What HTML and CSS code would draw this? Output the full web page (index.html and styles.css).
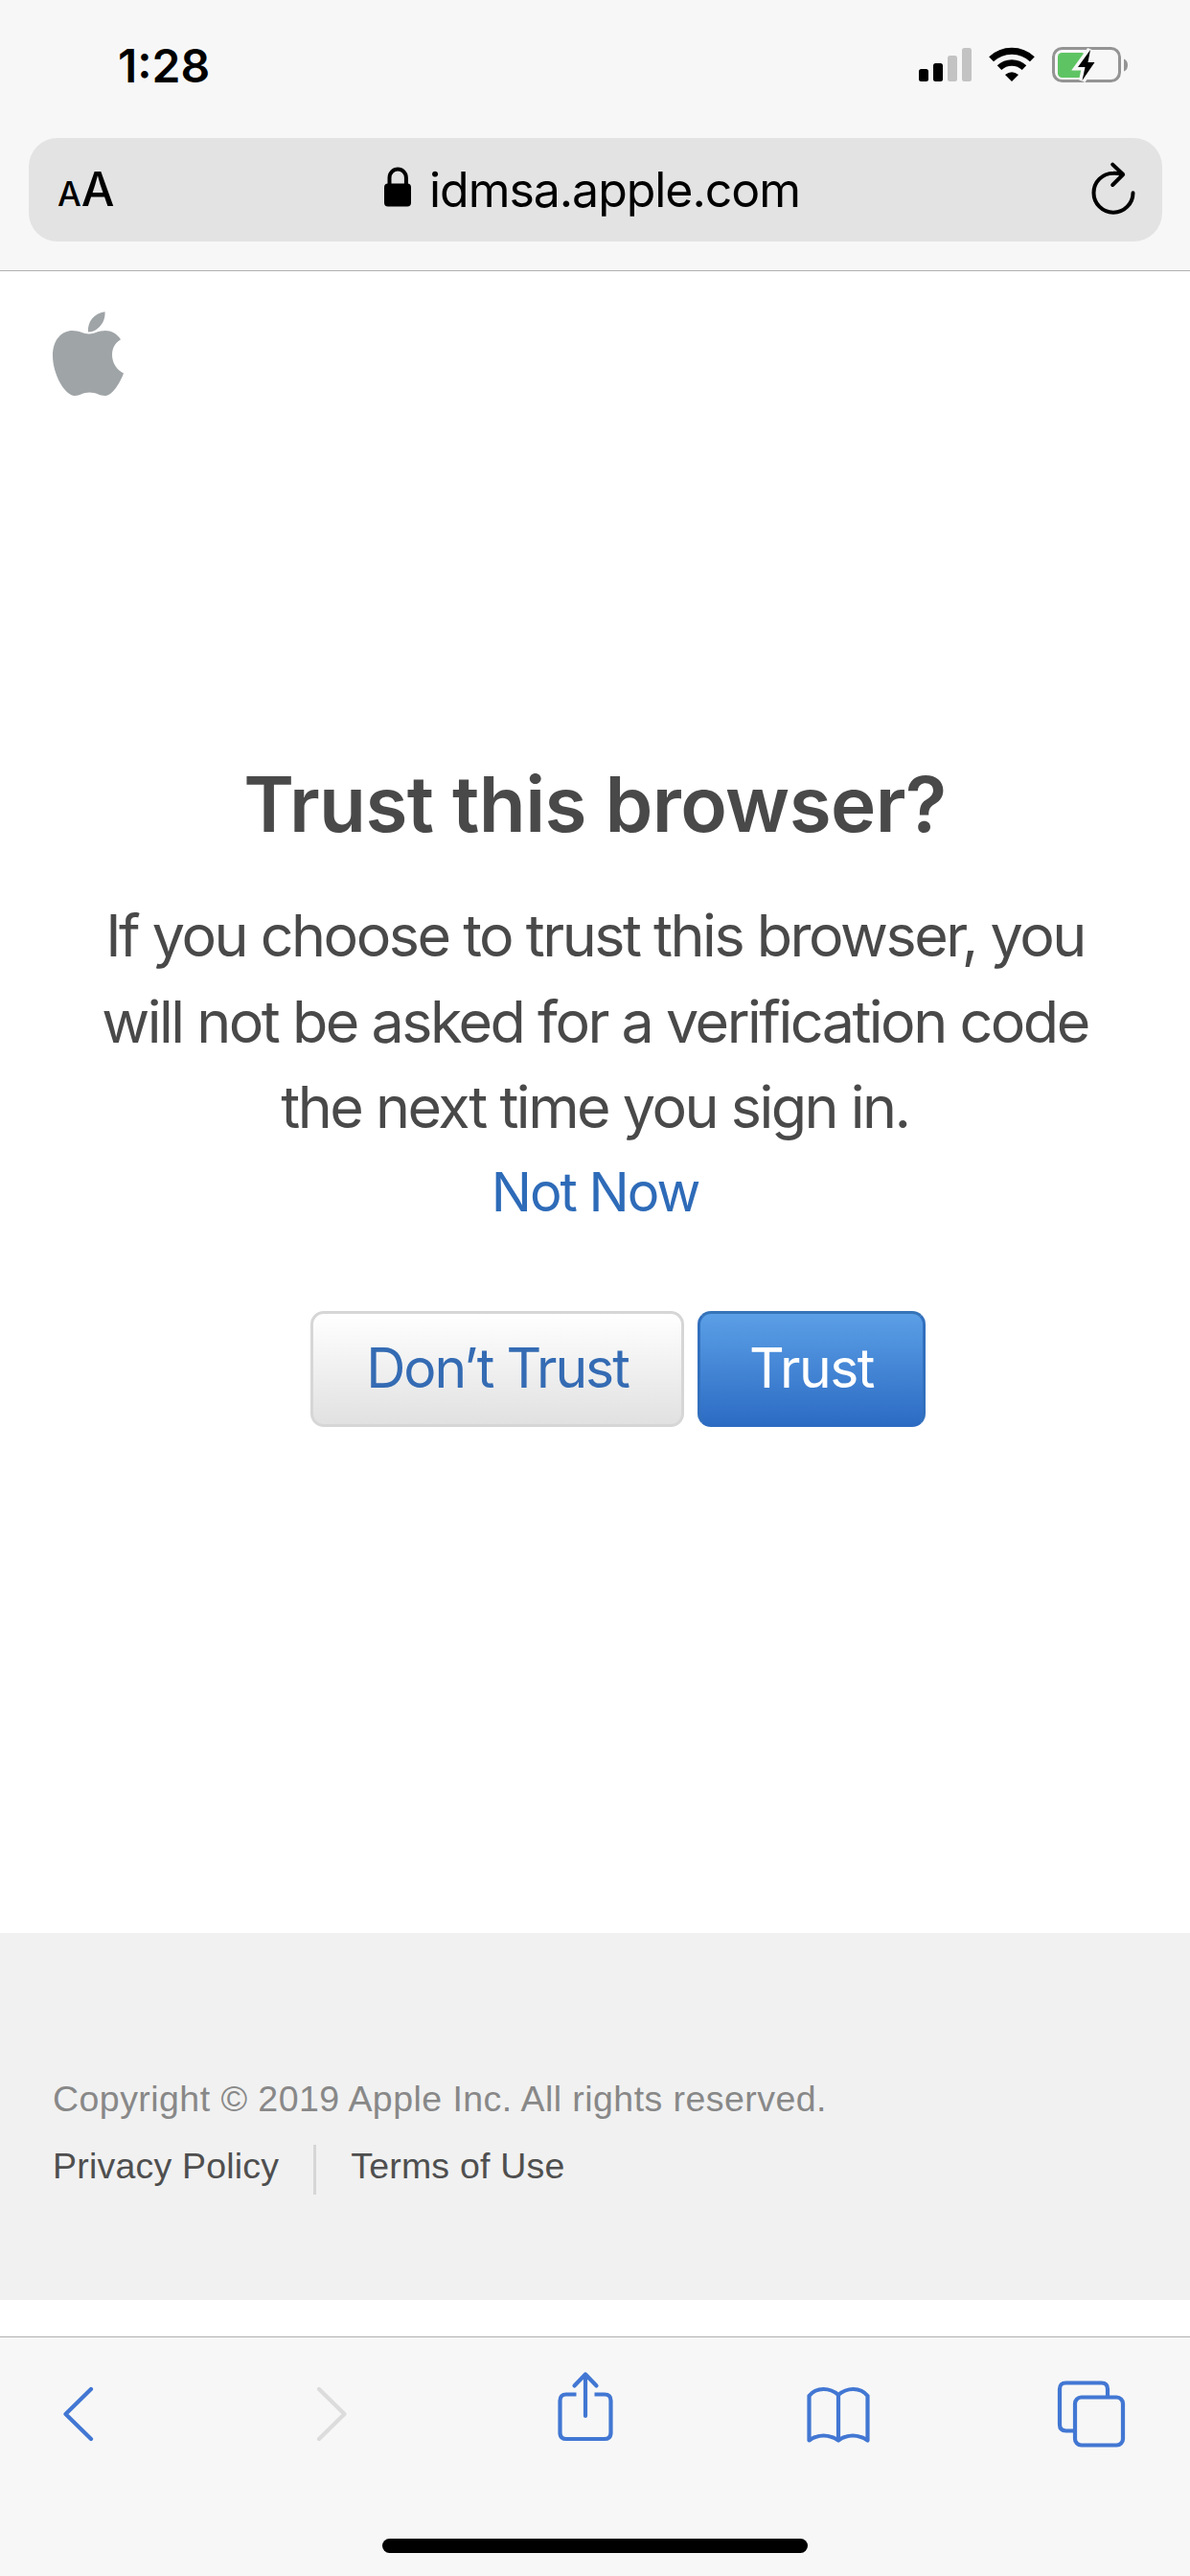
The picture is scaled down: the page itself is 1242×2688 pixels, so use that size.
FILE: index.html
```html
<!DOCTYPE html>
<html lang="en">
<head>
    <meta charset="UTF-8">
    <meta name="viewport" content="width=device-width, initial-scale=1.0">
    <title>Trust this browser?</title>
    <link rel="stylesheet" href="styles.css">
</head>
<body>
    <header class="browser-top">
        <div class="status-bar">
            <span class="time">1:28</span>
            <div class="status-icons">
                <svg class="signal" width="55" height="36" viewBox="0 0 55 36">
                    <rect x="0" y="22" width="10" height="13" rx="2.5"/>
                    <rect x="15" y="16" width="10" height="19" rx="2.5"/>
                    <rect x="30" y="8" width="10" height="27" rx="2.5" fill="#c3c3c3"/>
                    <rect x="45" y="0" width="10" height="35" rx="2.5" fill="#c3c3c3"/>
                </svg>
                <svg class="wifi" width="48" height="37" viewBox="0 0 48 37">
                    <path d="M2.600 12.800A31 31 0 0 1 45.400 12.800" fill="none" stroke="#000" stroke-width="7"/>
                    <path d="M11 21.600A19 19 0 0 1 37 21.600" fill="none" stroke="#000" stroke-width="6.600"/>
                    <path d="M17 29Q24 23.400 31 29L24 36Z"/>
                </svg>
                <svg class="battery" width="80" height="38" viewBox="0 0 80 38">
                    <rect x="1.500" y="1.500" width="69" height="34" rx="9" fill="none" stroke="#949494" stroke-width="3"/>
                    <path d="M75 12.500Q79 14 79 19T75 25.500Z" fill="#949494"/>
                    <rect x="6" y="6" width="29" height="26" rx="4.500" fill="#5ec463"/>
                    <path d="M40 3L27 21H34.500L31.500 35L44.500 16H37.500Z" stroke="#f7f7f7" stroke-width="7"/>
                    <path d="M40 3L27 21H34.500L31.500 35L44.500 16H37.500Z"/>
                </svg>
            </div>
        </div>
        <div class="address-bar">
            <span class="text-size"><small>A</small>A</span>
            <div class="url">
                <svg width="28" height="42" viewBox="0 0 28 42">
                    <path d="M5.500 20V11.500a8.700 9 0 0 1 17.400 0V20" fill="none" stroke="#000" stroke-width="4"/>
                    <rect x="0" y="17.500" width="28" height="24" rx="4"/>
                </svg>
                <span>idmsa.apple.com</span>
            </div>
            <svg class="reload" width="48" height="56" viewBox="0 0 48 56">
                <path d="M44.500 32.200A20.500 20.500 0 1 1 24 11.700Q29 11.500 34 13M23.200 2.600L34.200 13L23.200 24" fill="none" stroke="#000" stroke-width="4" stroke-linecap="round" stroke-linejoin="round"/>
            </svg>
        </div>
    </header>

    <main class="page">
        <svg class="logo" width="76" height="90" viewBox="0 0 76 90">
            <path d="M37 21.500C36 11 43 2 54.500 .3C55.500 11 47 21.500 37 21.500Z"/>
            <path d="M38 23.500C42.500 23.500 48 20 55 20C61 20 67 23 71 29.200C65 33 62 38 62 45C62 54 67 61 74 64.500C71 73 62.500 88 55 88C49 88 45.500 84.500 38.500 84.500C31.500 84.500 28 88 23 88C13 88 0 66 0 46C0 29 10 20 20.500 20C27.500 20 33 23.500 38 23.500Z"/>
        </svg>

        <h1>Trust this browser?</h1>
        <p class="message">
            If you choose to trust this browser, you<br>
            will not be asked for a verification code<br>
            the next time you sign in.
        </p>
        <a class="not-now" href="#">Not Now</a>
        <div class="buttons">
            <button class="btn btn-light">Don’t Trust</button>
            <button class="btn btn-blue">Trust</button>
        </div>
    </main>

    <footer class="footer">
        <p class="copyright">Copyright © 2019 Apple Inc. All rights reserved.</p>
        <div class="footer-links">
            <a class="privacy" href="#">Privacy Policy</a>
            <a class="terms" href="#">Terms of Use</a>
        </div>
    </footer>

    <nav class="toolbar">
        <div class="toolbar-icons">
            <svg width="70" height="80" viewBox="0 0 70 80">
                <path d="M48 22L21.500 48L48 74"/>
            </svg>
            <svg class="disabled" width="70" height="80" viewBox="0 0 70 80">
                <path d="M22 22L48.500 48L22 74"/>
            </svg>
            <svg width="70" height="80" viewBox="0 0 70 80">
                <path d="M25.500 27.500H15Q8.500 27.500 8.500 34V67.500Q8.500 74 15 74H55Q61.500 74 61.500 67.500V34Q61.500 27.500 55 27.500H44.500" stroke-linecap="butt"/>
                <path d="M35 50V7M23.500 18.500L35 6.500L46.500 18.500"/>
            </svg>
            <svg width="70" height="80" viewBox="0 0 70 80">
                <path d="M35 75.500V28Q28 22 19.500 22Q10 22 4.500 29V75.500Q11.500 70.500 19.500 70.500T35 75.500Q42 70.500 50 70.500T65.500 75.500V29Q60 22 50.500 22Q42 22 35 28"/>
            </svg>
            <svg width="70" height="80" viewBox="0 0 70 80">
                <path d="M52 30V22Q52 15.500 45.500 15.500H8.500Q2 15.500 2 22V59Q2 65.500 8.500 65.500H17"/>
                <rect x="18" y="30.500" width="50" height="50" rx="6.500"/>
            </svg>
        </div>
        <div class="home-indicator"></div>
    </nav>
</body>
</html>
```

FILE: styles.css
```css
* {
    box-sizing: border-box;
}
body {
    font-family: Inter, "Liberation Sans", sans-serif;
    background-color: white;
    color: #494949;
    margin: 0;
    height: 2688px;
    display: flex;
    flex-direction: column;
}
svg {
    display: block;
    overflow: visible;
    flex-shrink: 0;
}
a {
    text-decoration: none;
}

/* status bar and address bar */
.browser-top {
    height: 283px;
    background-color: #f7f7f7;
    border-bottom: 1px solid #b0b0b0;
    color: black;
}
.status-bar {
    height: 144px;
    display: flex;
    justify-content: space-between;
    padding: 48px 64px 0 123px;
}
.time {
    font-size: 48px;
    font-weight: 600;
    line-height: 41px;
}
.status-icons {
    display: flex;
    gap: 18px;
}
.signal {
    margin-top: 2px;
}
.wifi, .battery {
    margin-top: 1px;
}
.address-bar {
    height: 108px;
    margin: 0 29px 0 30px;
    padding: 0 27px 0 30px;
    background-color: #e3e3e3;
    border-radius: 30px;
    display: flex;
    justify-content: space-between;
    align-items: center;
}
.text-size {
    font-size: 49px;
    font-weight: 500;
    line-height: 108px;
    width: 60px;
    padding-top: 3px;
    white-space: nowrap;
}
.text-size small {
    font-size: 35px;
}
.url {
    display: flex;
    align-items: center;
    gap: 19px;
    margin-right: 22px;
    font-size: 50px;
    line-height: 108px;
    letter-spacing: -1.05px;
}
.url svg {
    margin-top: -6px;
}
.reload {
    margin-top: -3px;
}

/* page content */
.page {
    height: 1734px;
    display: flex;
    flex-direction: column;
    align-items: center;
}
.logo {
    align-self: flex-start;
    margin: 42px 0 0 55px;
    fill: #9fa4a7;
}
h1 {
    margin: 379px 0 0;
    font-size: 80px;
    font-weight: 600;
    line-height: 90px;
    letter-spacing: -0.6px;
    white-space: nowrap;
}
.message {
    margin: 48px 0 0;
    font-size: 61px;
    line-height: 89.5px;
    letter-spacing: -2.5px;
    text-align: center;
    white-space: nowrap;
}
.not-now {
    margin-top: 5px;
    font-size: 56px;
    line-height: 76px;
    letter-spacing: -2px;
    color: #2e6bb8;
}
.buttons {
    display: flex;
    gap: 14px;
    margin-top: 86px;
    padding-left: 48px;
}
.btn {
    height: 121px;
    padding: 0 0 2px;
    border: 3px solid #d6d6d6;
    border-radius: 14px;
    font-family: inherit;
    font-size: 57px;
    letter-spacing: -2px;
}
.btn-light {
    width: 390px;
    color: #346bb3;
    background: linear-gradient(#ffffff, #e1e1e1);
}
.btn-blue {
    width: 238px;
    color: white;
    border-color: #3674b8 #3270be #2d6bc2;
    background: linear-gradient(#5b9fe6, #2d6cc4);
    letter-spacing: -1.5px;
}

/* footer */
.footer {
    height: 383px;
    padding: 143px 55px 0;
    background-color: #f1f1f1;
    font-family: "Liberation Sans", Arial, sans-serif;
    font-size: 37.5px;
}
.copyright {
    margin: 0 0 18px;
    line-height: 60px;
    letter-spacing: 0.45px;
    color: #888;
}
.footer-links {
    display: flex;
    line-height: 44px;
    letter-spacing: 0.2px;
}
.footer-links a {
    color: #4f4f4f;
    height: 52px;
}
.privacy {
    padding-right: 36px;
    border-right: 3px solid #d6d6d6;
}
.terms {
    padding-left: 36px;
}

/* bottom toolbar */
.toolbar {
    margin-top: 38px;
    height: 250px;
    background-color: #f7f7f7;
    border-top: 1px solid #b0b0b0;
}
.toolbar-icons {
    display: flex;
    justify-content: space-between;
    padding: 32px 68px 0 47px;
    fill: none;
    stroke: #4277d3;
    stroke-width: 4.2;
    stroke-linecap: round;
    stroke-linejoin: round;
}
.disabled {
    stroke: #dcdcdc;
}
.home-indicator {
    width: 444px;
    height: 15px;
    margin: 98px auto 0;
    border-radius: 8px;
    background-color: black;
}
```
